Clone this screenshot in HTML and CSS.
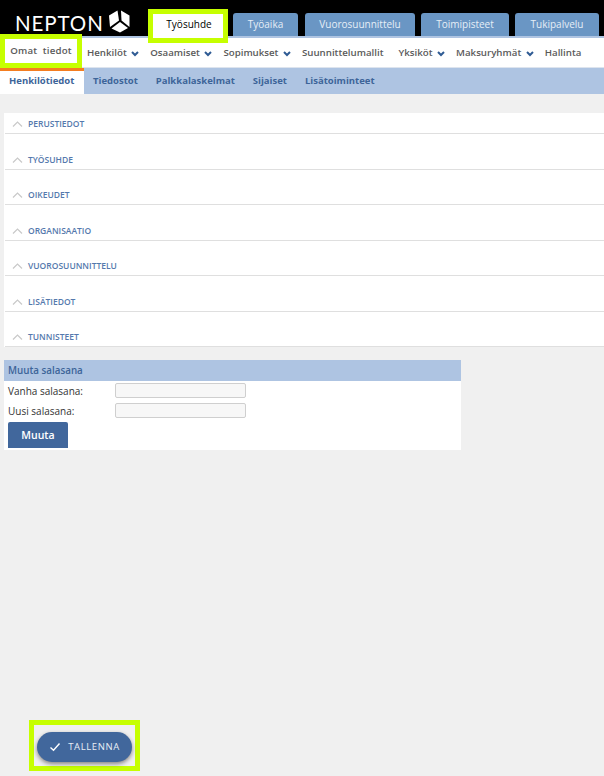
FILE: index.html
```html
<!DOCTYPE html>
<html>
<head>
    <title>Nepton</title>
    <link rel="stylesheet" href="styles.css">
</head>
<body>
    <div class="header">
        <div class="logo">
            <span class="logo-text">NEPTON</span>
            <svg class="logo-mark" width="21" height="23" viewBox="0 0 21 23">
                <path fill="#fff" d="M0 5.5 L8.5 0.5 L10 10.5 L1 17 Z"/>
                <path fill="#fff" d="M12 0.5 L20.5 5.5 L20.5 17 L12.5 10.5 Z"/>
                <path fill="#fff" d="M2.5 18.5 L11 12 L19 18 L11 22.5 Z"/>
            </svg>
        </div>
        <div class="tabs">
            <a class="tab tab-active">Työsuhde</a>
            <a class="tab tab-tyoaika">Työaika</a>
            <a class="tab tab-vuoro">Vuorosuunnittelu</a>
            <a class="tab tab-toimi">Toimipisteet</a>
            <a class="tab tab-tuki">Tukipalvelu</a>
        </div>
    </div>
    <div class="menu">
        <a class="menu-item omat">Omat&nbsp; tiedot</a>
        <a class="menu-item henk">Henkilöt <svg class="caret" width="8" height="6" viewBox="0 0 8 6"><path d="M1 1 L4 4 L7 1" fill="none" stroke="#2f5b94" stroke-width="2"/></svg></a>
        <a class="menu-item">Osaamiset <svg class="caret" width="8" height="6" viewBox="0 0 8 6"><path d="M1 1 L4 4 L7 1" fill="none" stroke="#2f5b94" stroke-width="2"/></svg></a>
        <a class="menu-item">Sopimukset <svg class="caret" width="8" height="6" viewBox="0 0 8 6"><path d="M1 1 L4 4 L7 1" fill="none" stroke="#2f5b94" stroke-width="2"/></svg></a>
        <a class="menu-item">Suunnittelumallit</a>
        <a class="menu-item yks">Yksiköt <svg class="caret" width="8" height="6" viewBox="0 0 8 6"><path d="M1 1 L4 4 L7 1" fill="none" stroke="#2f5b94" stroke-width="2"/></svg></a>
        <a class="menu-item">Maksuryhmät <svg class="caret" width="8" height="6" viewBox="0 0 8 6"><path d="M1 1 L4 4 L7 1" fill="none" stroke="#2f5b94" stroke-width="2"/></svg></a>
        <a class="menu-item">Hallinta</a>
    </div>
    <div class="subnav">
        <a class="sub-item sub-active">Henkilötiedot</a>
        <a class="sub-item sub-tied">Tiedostot</a>
        <a class="sub-item">Palkkalaskelmat</a>
        <a class="sub-item">Sijaiset</a>
        <a class="sub-item">Lisätoiminteet</a>
    </div>

    <div class="sections">
        <div class="section section-first"><svg class="chevron" width="11" height="6" viewBox="0 0 11 6"><path d="M1 5.5 L5.5 1 L10 5.5" fill="none" stroke="#c9c9c9" stroke-width="1.2"/></svg><span>PERUSTIEDOT</span></div>
        <div class="section"><svg class="chevron" width="11" height="6" viewBox="0 0 11 6"><path d="M1 5.5 L5.5 1 L10 5.5" fill="none" stroke="#c9c9c9" stroke-width="1.2"/></svg><span>TYÖSUHDE</span></div>
        <div class="section"><svg class="chevron" width="11" height="6" viewBox="0 0 11 6"><path d="M1 5.5 L5.5 1 L10 5.5" fill="none" stroke="#c9c9c9" stroke-width="1.2"/></svg><span>OIKEUDET</span></div>
        <div class="section"><svg class="chevron" width="11" height="6" viewBox="0 0 11 6"><path d="M1 5.5 L5.5 1 L10 5.5" fill="none" stroke="#c9c9c9" stroke-width="1.2"/></svg><span>ORGANISAATIO</span></div>
        <div class="section"><svg class="chevron" width="11" height="6" viewBox="0 0 11 6"><path d="M1 5.5 L5.5 1 L10 5.5" fill="none" stroke="#c9c9c9" stroke-width="1.2"/></svg><span>VUOROSUUNNITTELU</span></div>
        <div class="section"><svg class="chevron" width="11" height="6" viewBox="0 0 11 6"><path d="M1 5.5 L5.5 1 L10 5.5" fill="none" stroke="#c9c9c9" stroke-width="1.2"/></svg><span>LISÄTIEDOT</span></div>
        <div class="section"><svg class="chevron" width="11" height="6" viewBox="0 0 11 6"><path d="M1 5.5 L5.5 1 L10 5.5" fill="none" stroke="#c9c9c9" stroke-width="1.2"/></svg><span>TUNNISTEET</span></div>
    </div>

    <div class="password">
        <div class="password-title">Muuta salasana</div>
        <div class="password-row"><label for="old-pass">Vanha salasana:</label><input id="old-pass" type="text"></div>
        <div class="password-row"><label for="new-pass">Uusi salasana:</label><input id="new-pass" type="text"></div>
        <button class="change-button">Muuta</button>
    </div>

    <div class="save-mark">
        <button class="save-button">
            <svg width="12" height="10" viewBox="0 0 12 10"><path d="M1.5 5.5 L4.5 8.2 L10.5 1.5" fill="none" stroke="#fff" stroke-width="1.4"/></svg>
            TALLENNA
        </button>
    </div>
</body>
</html>
```

FILE: styles.css
```css
html, body {
    margin: 0;
    padding: 0;
}
body {
    width: 604px;
    height: 776px;
    overflow: hidden;
    position: relative;
    background-color: #f0f0f0;
    font-family: "Open Sans", Arial, sans-serif;
}

/* top bar */
.header {
    height: 36px;
    background-color: #000;
    border-bottom: 2px solid #aec4e2;
    display: flex;
}
.logo {
    width: 148px;
    display: flex;
    align-items: flex-start;
    flex-shrink: 0;
}
.logo-text {
    margin: 13px 0 0 15px;
    font-family: "Lato", sans-serif;
    font-size: 20.5px;
    font-weight: 400;
    letter-spacing: 0.9px;
    color: #fff;
    line-height: 1;
}
.logo-mark {
    margin: 10px 0 0 5px;
}
.tabs {
    display: flex;
    align-items: flex-end;
    height: 36px;
}
.tab {
    display: block;
    height: 23px;
    line-height: 23px;
    text-align: center;
    font-size: 10px;
    color: #e6eef7;
    background-color: #6a96c4;
    border-radius: 3px 3px 0 0;
}
.tab-tyoaika { width: 65px; margin-left: 5px; }
.tab-vuoro { width: 110px; margin-left: 7px; }
.tab-toimi { width: 88px; margin-left: 6px; }
.tab-tuki { width: 84px; margin-left: 6px; }
.tab-active {
    width: 80px;
    height: 34px;
    box-sizing: border-box;
    padding-left: 2px;
    background-color: #fff;
    color: #000;
    line-height: 21px;
    border: 5px solid #c6ff00;
    border-radius: 0;
    position: relative;
    top: 7px;
    z-index: 2;
}

/* main menu */
.menu {
    height: 29px;
    background-color: #fff;
    display: flex;
    align-items: center;
    gap: 11px;
    border-bottom: 1px solid #dde4ee;
}
.menu-item {
    font-size: 9.7px;
    font-weight: 600;
    color: #5a5a5a;
    white-space: nowrap;
}
.caret { margin-left: 2px; vertical-align: -1px; }
.omat {
    box-sizing: border-box;
    width: 82px;
    height: 34px;
    line-height: 23px;
    text-align: center;
    letter-spacing: 0.2px;
    border: 5px solid #c6ff00;
    background-color: #fff;
    position: relative;
    top: -2px;
    z-index: 2;
}
.henk { margin-left: -6px; }
.yks { margin-left: 4px; }

/* sub navigation */
.subnav {
    height: 26px;
    background-color: #aec4e2;
    display: flex;
    gap: 18px;
}
.sub-item {
    font-size: 9.5px;
    font-weight: 700;
    color: #3d6499;
    line-height: 25px;
}
.sub-active {
    box-sizing: border-box;
    width: 84px;
    padding-left: 9px;
    background-color: #fff;
    border-top: 3px solid #f47d20;
    line-height: 20px;
}
.sub-tied { margin-left: -9px; }

/* collapsed sections */
.sections {
    margin: 19px 0 0 4px;
    background-color: #fff;
}
.section {
    height: 35.5px;
    box-sizing: border-box;
    padding: 0 0 3px 9px;
    border-bottom: 1px solid #dfdfdf;
    display: flex;
    align-items: flex-end;
    margin-left: 1px;
}
.section-first {
    height: 21px;
}
.section span {
    font-size: 8.5px;
    font-weight: 600;
    color: #5579ad;
    line-height: 12px;
}
.chevron { margin: 0 5px 3px -2px; }

/* password form */
.password {
    margin: 13px 0 0 4px;
    width: 457px;
    height: 90px;
    background-color: #fff;
}
.password-title {
    height: 21px;
    line-height: 21px;
    padding-left: 4px;
    background-color: #aec4e2;
    font-size: 9.8px;
    font-weight: 600;
    color: #3d6499;
}
.password-row {
    display: flex;
    align-items: center;
    height: 20px;
    font-size: 10px;
    color: #333;
    padding-left: 4px;
}
.password-row label { width: 107px; }
.password-row input {
    box-sizing: border-box;
    width: 131px;
    height: 15px;
    margin: -1px 0 0 0;
    background-color: #f7f7f7;
    border: 1px solid #cfcfcf;
    border-radius: 2px;
    padding: 0;
}
.change-button {
    display: block;
    margin: 1px 0 0 4px;
    width: 60px;
    height: 26px;
    background-color: #41679c;
    color: #fff;
    border: none;
    border-radius: 2px 2px 0 0;
    font-family: "Open Sans", Arial, sans-serif;
    font-size: 10.5px;
    font-weight: 600;
}

/* floating save button, sits over the page */
.save-mark {
    position: absolute;
    left: 29px;
    top: 720px;
    box-sizing: border-box;
    width: 111px;
    height: 51px;
    padding-top: 2px;
    border: 5px solid #c6ff00;
    display: flex;
    align-items: center;
    justify-content: center;
}
.save-button {
    width: 95px;
    height: 30px;
    border: none;
    border-radius: 15px;
    background-color: #41679c;
    color: #e8eef6;
    font-family: "Open Sans", Arial, sans-serif;
    font-size: 9.5px;
    letter-spacing: 0.6px;
    box-shadow: 0 2px 4px rgba(0, 0, 0, 0.45);
    display: flex;
    align-items: center;
    justify-content: center;
    gap: 7px;
    padding: 0;
}
```
